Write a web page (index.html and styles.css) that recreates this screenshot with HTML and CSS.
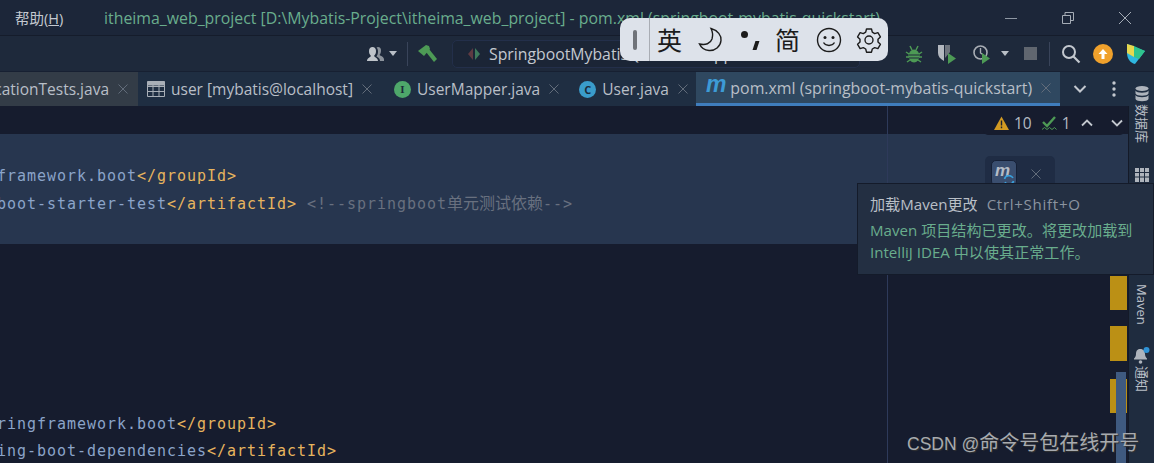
FILE: index.html
```html
<!DOCTYPE html>
<html lang="zh">
<head>
<meta charset="utf-8">
<title>pom.xml</title>
<link rel="stylesheet" href="styles.css">
</head>
<body>
<div class="app">
  <header class="titlebar">
    <span class="menu">帮助(<u>H</u>)</span>
    <span class="title">itheima_web_project [D:\Mybatis-Project\itheima_web_project] - pom.xml (springboot-mybatis-quickstart)</span>
    <div class="winctl">
      <svg width="14" height="14" viewBox="0 0 14 14"><path d="M1 7.500h12" stroke="#8e97a3" fill="none"/></svg>
      <svg width="14" height="14" viewBox="0 0 14 14"><path d="M1.500 4.500h8v8h-8zM4 4.500v-3h8.500v8h-3" stroke="#a5acb6" fill="none"/></svg>
      <svg width="14" height="14" viewBox="0 0 14 14"><path d="M1 1l12 12M13 1L1 13" stroke="#a5acb6" fill="none"/></svg>
    </div>
  </header>

  <div class="toolbar">
    <svg class="i-user" width="20" height="20" viewBox="0 0 20 20"><path d="M1 17c0-3 3-3.500 4-5-1.500-1.500-2-3-2-5 0-2.500 1.500-4 3.500-4s3.500 1.500 3.500 4c0 2-.5 3.500-2 5 1 1.500 4 2 4 5z" fill="#bfc4ca"/><path d="M12 3c2 0 3 1.500 3 3.500 0 2-.5 3-1.500 4.500 1 1 4.500 1.500 4.500 4.500v1.500h-4c0-2-1-3-3.500-4.500 1-1.500 1.500-3 1.500-5 0-1.500-.5-3-1.500-4z" fill="#8c939c"/></svg>
    <span class="caret"></span>
    <span class="tb-sep"></span>
    <svg class="i-hammer" width="20" height="20" viewBox="0 0 20 20"><path d="M0 7L8 1l3 1 1 3-6 7z" fill="#4d9a55"/><path d="M8 8l3-3 8 10-3 3z" fill="#4d9a55"/></svg>
    <div class="runcfg">
      <svg width="14" height="14" viewBox="0 0 14 14"><path d="M6 1L1 7l5 6z" fill="#5f3a42"/><path d="M8 1l5 6-5 6z" fill="#3f7a5c"/></svg>
      <span class="runcfg-name">SpringbootMybatisQuickstartApplication</span>
    </div>
    <svg class="i-bug" width="18" height="20" viewBox="0 0 18 20"><ellipse cx="9" cy="12" rx="5.500" ry="6.500" fill="#4d9a55"/><path d="M5 2l2 4M13 2l-2 4M1 8l3 2M17 8l-3 2M1 13h3M14 13h3M2 18l3-2M16 18l-3-2" stroke="#4d9a55" stroke-width="1.500"/><path d="M4 11h10M4 14h10" stroke="#1e293b"/></svg>
    <svg class="i-cover" width="20" height="20" viewBox="0 0 20 20"><path d="M1 1h6v16C3 15 1 12 1 9z" fill="#b3b8bf"/><path d="M8 1h5v7l-5 6z" fill="#6f757e"/><path d="M11 9l8 5.500-8 5.500z" fill="#4d9a55"/></svg>
    <svg class="i-prof" width="20" height="20" viewBox="0 0 20 20"><circle cx="8.500" cy="8.500" r="6.500" fill="none" stroke="#a8adb4" stroke-width="1.600"/><path d="M8.500 4v5l3 2" stroke="#a8adb4" fill="none" stroke-width="1.400"/><path d="M10 9l8 5.500-8 5.500z" fill="#4d9a55"/></svg>
    <span class="caret caret-prof"></span>
    <span class="stop"></span>
    <span class="tb-sep tb-sep2"></span>
    <svg class="i-search" width="20" height="20" viewBox="0 0 20 20"><circle cx="8" cy="8" r="6" fill="none" stroke="#c3c8cf" stroke-width="2"/><path d="M12.500 12.500l6 6" stroke="#c3c8cf" stroke-width="2.200"/></svg>
    <svg class="i-up" width="20" height="20" viewBox="0 0 20 20"><circle cx="10" cy="10" r="10" fill="#f0a12c"/><path d="M10 5l4.500 5H11.500v5h-3v-5H5.500z" fill="#fff"/></svg>
    <svg class="i-color" width="20" height="22" viewBox="0 0 20 22"><path d="M1 1l18 7-10 13C4 20 1 15 1 10z" fill="#2fb7e0"/><path d="M8 3l11 5-6 8-5-2z" fill="#2fc48d"/><path d="M1 1l7 2v11L1 10z" fill="#e7d84e"/></svg>
  </div>

  <nav class="tabs">
    <div class="tab tab-first"><span class="tab-name">cationTests.java</span><svg class="x" width="10" height="10" viewBox="0 0 10 10"><path d="M.5.500l9 9M9.500.500l-9 9"/></svg></div>
    <div class="tab">
      <svg class="tab-ic" width="18" height="16" viewBox="0 0 18 16"><path d="M.5.500h17v15H.5z" fill="none" stroke="#a9afb7"/><path d="M.5 5.500h17M.5 10.500h17M6 .5v15M12 .5v15" stroke="#a9afb7"/><path d="M.5.500h17v4H.5z" fill="#a9afb7"/></svg>
      <span class="tab-name">user [mybatis@localhost]</span><svg class="x" width="10" height="10" viewBox="0 0 10 10"><path d="M.5.500l9 9M9.500.500l-9 9"/></svg>
    </div>
    <div class="tab tab-mapper"><span class="badge badge-i">I</span><span class="tab-name">UserMapper.java</span><svg class="x" width="10" height="10" viewBox="0 0 10 10"><path d="M.5.500l9 9M9.500.500l-9 9"/></svg></div>
    <div class="tab tab-user"><span class="badge badge-c">C</span><span class="tab-name">User.java</span><svg class="x" width="10" height="10" viewBox="0 0 10 10"><path d="M.5.500l9 9M9.500.500l-9 9"/></svg></div>
    <div class="tab tab-active"><span class="m-mark">m</span><span class="tab-name">pom.xml (springboot-mybatis-quickstart)</span><svg class="x" width="10" height="10" viewBox="0 0 10 10"><path d="M.5.500l9 9M9.500.500l-9 9"/></svg></div>
    <svg class="i-chev" width="14" height="10" viewBox="0 0 14 10"><path d="M1.500 2l5.500 5.500L12.500 2" stroke="#c3c8cf" stroke-width="2" fill="none"/></svg>
    <svg class="i-dots" width="4" height="16" viewBox="0 0 4 16"><circle cx="2" cy="2" r="1.700" fill="#c3c8cf"/><circle cx="2" cy="8" r="1.700" fill="#c3c8cf"/><circle cx="2" cy="14" r="1.700" fill="#c3c8cf"/></svg>
  </nav>

  <main class="body">
    <section class="editor">
      <div class="code">
        <span class="ln"> </span>
        <span class="ln"> </span>
        <span class="ln">framework.boot<b>&lt;/groupId&gt;</b></span>
        <span class="ln">boot-starter-test<b>&lt;/artifactId&gt;</b> <i>&lt;!--springboot<em>单元测试依赖</em>--&gt;</i></span>
        <span class="ln"> </span>
        <span class="ln"> </span>
        <span class="ln"> </span>
        <span class="ln"> </span>
        <span class="ln"> </span>
        <span class="ln"> </span>
        <span class="ln"> </span>
        <span class="ln">ringframework.boot<b>&lt;/groupId&gt;</b></span>
        <span class="ln">ing-boot-dependencies<b>&lt;/artifactId&gt;</b></span>
      </div>
      <div class="select-band"></div>
      <div class="margin-line"></div>
      <div class="inspect">
        <svg width="15" height="14" viewBox="0 0 15 14"><path d="M7.500.5L15 14H0z" fill="#d29a22"/><path d="M6.800 4.500h1.400v5H6.800zM6.800 10.500h1.400v1.800H6.800z" fill="#1b2030"/></svg>
        <span class="cnt">10</span>
        <svg class="i-typo" width="15" height="15" viewBox="0 0 15 15"><path d="M1 6l4 4 8-9" stroke="#4e9a55" stroke-width="2.400" fill="none"/><path d="M0 13.500l2.500-2 2.500 2 2.500-2 2.500 2 2.500-2 2 2" stroke="#4e9a55" fill="none"/></svg>
        <span class="cnt">1</span>
        <svg class="i-up-arrow" width="12" height="8" viewBox="0 0 12 8"><path d="M1 6.500l5-5 5 5" stroke="#c3c8cf" stroke-width="1.800" fill="none"/></svg>
        <svg class="i-down-arrow" width="12" height="8" viewBox="0 0 12 8"><path d="M1 1.500l5 5 5-5" stroke="#c3c8cf" stroke-width="1.800" fill="none"/></svg>
      </div>
      <div class="float-m">
        <span class="float-btn"><span class="m-small">m</span>
          <svg class="i-sync" width="12" height="10" viewBox="0 0 12 10"><path d="M1.500 4A4.500 4 0 0 1 10 3M10.500 6A4.500 4 0 0 1 2 7" stroke="#39a0dc" stroke-width="1.600" fill="none"/></svg>
        </span>
        <svg class="x x-float" width="10" height="10" viewBox="0 0 10 10"><path d="M.5.500l9 9M9.500.500l-9 9"/></svg>
      </div>
      <span class="mark mark-1"></span>
      <span class="mark mark-2"></span>
      <span class="mark mark-3"></span>
      <span class="thumb"></span>
    </section>
    <aside class="stripe">
      <svg class="s-db" width="14" height="16" viewBox="0 0 14 16"><ellipse cx="7" cy="2.500" rx="6.500" ry="2.500" fill="#aeb4bc"/><path d="M.5 4.500c1 3 12 3 13 0v3c-1 3-12 3-13 0zM.5 9c1 3 12 3 13 0v4c-1 3-12 3-13 0z" fill="#aeb4bc"/></svg>
      <span class="s-text s-db-text">数据库</span>
      <svg class="s-table" width="14" height="14" viewBox="0 0 14 14"><path d="M0 0h14v14H0z" fill="#aeb4bc"/><path d="M0 4.500h14M0 9h14M4.500 0v14M9.500 0v14" stroke="#1f2c3f"/></svg>
      <span class="s-text s-maven">Maven</span>
      <svg class="s-bell" width="17" height="17" viewBox="0 0 17 17"><path d="M7 2c-3 0-4 2.500-4 5 0 2-1 3.500-2 4.500v1h13v-1c-1-1-2-2.500-2-4.500 0-2.500-1-5-5-5z" fill="#aeb4bc"/><circle cx="7.500" cy="15" r="1.800" fill="#aeb4bc"/><circle cx="13.500" cy="3" r="3" fill="#2f93d6"/></svg>
      <span class="s-text s-notify">通知</span>
    </aside>
  </main>

  <div class="ime">
    <span class="ime-grip"><span class="ime-handle"></span></span>
    <span class="ime-key">英</span>
    <svg class="ime-ic" width="26" height="26" viewBox="0 0 26 26"><path d="M14 1.500c7 2 10.500 7 10 12-.5 6-6 10.500-12 10-4.500-.4-8-3-9.500-6.500 6 1.500 11-.5 12.500-5 1-3.500.8-7-1-10.500z" fill="none" stroke="#1c1c1c" stroke-width="1.400"/></svg>
    <span class="ime-punc"><span class="dot"></span><span class="comma"></span></span>
    <span class="ime-key ime-key2">简</span>
    <svg class="ime-ic ime-smile" width="26" height="26" viewBox="0 0 26 26"><circle cx="13" cy="13" r="11.500" fill="none" stroke="#1c1c1c" stroke-width="1.400"/><circle cx="9" cy="10.500" r="1.500" fill="#1c1c1c"/><circle cx="17" cy="10.500" r="1.500" fill="#1c1c1c"/><path d="M7.500 15.500c2.500 4 8.500 4 11 0" fill="none" stroke="#1c1c1c" stroke-width="1.400"/></svg>
    <svg class="ime-ic ime-gear" width="26" height="26" viewBox="0 0 26 26"><path d="M10.500 2h5l.8 3.200 2.400 1.400 3.200-1 2.500 4.300-2.400 2.300v2.800l2.400 2.300-2.500 4.300-3.200-1-2.400 1.400-.8 3.200h-5l-.8-3.200-2.400-1.400-3.200 1-2.500-4.300 2.400-2.300v-2.800L1.600 9.900l2.500-4.300 3.200 1 2.400-1.400z" fill="none" stroke="#1c1c1c" stroke-width="1.400" stroke-linejoin="round"/><circle cx="13" cy="13" r="4" fill="none" stroke="#1c1c1c" stroke-width="1.400"/></svg>
  </div>

  <div class="tooltip">
    <p class="tip-head">加载Maven更改<span class="tip-key">Ctrl+Shift+O</span></p>
    <p class="tip-body">Maven 项目结构已更改。将更改加载到<br>IntelliJ IDEA 中以使其正常工作。</p>
  </div>

  <div class="watermark">CSDN @<span class="wm-cjk">命令号包在线开号</span></div>
</div>
</body>
</html>
```
FILE: styles.css
```css
* { box-sizing: border-box; }
html, body { margin: 0; padding: 0; }
body { width: 1154px; height: 463px; overflow: hidden; background: #161c2e; }
.app {
  position: relative; width: 1154px; height: 463px; overflow: hidden;
  display: flex; flex-direction: column;
  font-family: "Open Sans", "Noto Sans CJK SC", sans-serif; font-size: 15.500px; color: #b9bfc7;
}
.titlebar {
  height: 36px; flex: none; display: flex; align-items: center;
  background: #1c2639; padding-left: 15px;
  border-bottom: 1px solid #151c2b;
}
.menu { font-size: 14.500px; color: #c4c9d0; width: 89px; flex: none; }
.title { color: #69ad8d; font-size: 15.870px; white-space: nowrap; }
.winctl { margin-left: auto; display: flex; gap: 43px; padding-right: 22px; }
.toolbar {
  height: 35px; flex: none; display: flex; align-items: center;
  background: #1e293b; padding-left: 366px;
}
.caret { width: 0; height: 0; border: 4.500px solid transparent; border-top: 5px solid #b9bfc7; border-bottom: 0; margin-left: 3px; }
.tb-sep { width: 1px; height: 24px; background: #39445a; margin-left: 10px; }
.i-hammer { margin-left: 10px; }
.runcfg {
  margin-left: 14px; width: 408px; height: 28px; flex: none; overflow: hidden;
  display: flex; align-items: center; gap: 8px; padding-left: 14px;
  border: 1px solid #232f4a; border-radius: 5px; background: #1b2536; white-space: nowrap;
}
.runcfg-name { color: #c4c9d0; font-size: 15.800px; }
.i-bug { margin-left: 45px; }
.i-cover { margin-left: 14px; }
.i-prof { margin-left: 15px; }
.caret-prof { margin-left: 9px; }
.stop { width: 13px; height: 13px; background: #60666f; margin-left: 15px; }
.tb-sep2 { margin-left: 12px; }
.i-search { margin-left: 11px; }
.i-up { margin-left: 12px; }
.i-color { margin-left: 13px; }
.tabs {
  height: 35px; flex: none; display: flex; align-items: center;
  background: #1f2e42; border-top: 1px solid #172032;
}
.tab { display: flex; align-items: center; height: 100%; white-space: nowrap; }
.tab-name { color: #b9bfc7; }
.tab-first {
  width: 138px; flex: none; background: #333c47; margin-right: 9px; overflow: hidden;
  justify-content: flex-end; padding-right: 10px;
}
.x { flex: none; margin-left: 9px; fill: none; stroke: #626c7a; }
.tab-ic { margin-right: 6px; }
.badge {
  width: 17px; height: 17px; border-radius: 50%; color: #1c2a3a; font-size: 11px; font-weight: 700;
  display: inline-flex; align-items: center; justify-content: center; margin-right: 6px; flex: none;
}
.badge-i { background: #4ea76a; font-family: "Liberation Serif", serif; }
.badge-c { background: #3a9ccb; }
.tab-mapper { margin-left: 22px; }
.tab-user { margin-left: 20px; }
.tab-active {
  margin-left: 8px; width: 364px; flex: none; background: #2f4860; padding-left: 10px;
  border-bottom: 3px solid #3f7dbd;
}
.tab-active .tab-name { font-size: 15.900px; }
.m-mark { color: #3d9bd6; font: italic 700 23px/1 "Liberation Sans", sans-serif; margin-right: 4px; margin-top: -6px; }
.i-chev { margin-left: 13px; }
.i-dots { margin-left: 25px; }
.body { flex: 1; min-height: 0; display: flex; }
.editor { position: relative; flex: 1; min-width: 0; background: #161c2e; overflow: hidden; }
.select-band { position: absolute; left: 0; right: 0; top: 28px; height: 110px; background: #27364f; }
.code {
  position: relative; z-index: 1; margin: 2px 0 0 -3px;
  font: 15px/27.500px "DejaVu Sans Mono", monospace; letter-spacing: .97px; color: #8ba4c9;
}
.ln { display: block; height: 27.500px; white-space: pre; }
.code b { font-weight: 400; color: #e6b45e; }
.code i { font-style: normal; color: #68707f; }
.code em { font: normal 16px/1 "Noto Sans CJK SC", sans-serif; letter-spacing: 0; }
.margin-line { position: absolute; z-index: 2; left: 887px; top: 0; bottom: 0; width: 1px; background: #2e3a5a; }
.inspect {
  position: absolute; z-index: 3; top: 0; left: 983px; width: 142px; height: 29px; background: #161c2e;
  border-radius: 0 0 5px 5px; display: flex; align-items: center; padding: 5px 0 0 11px; gap: 5px;
}
.cnt { font-size: 15.500px; color: #b4bac2; }
.i-typo { margin-left: 5px; }
.i-up-arrow { margin-left: 5px; }
.i-down-arrow { margin-left: 13px; }
.float-m {
  position: absolute; z-index: 3; left: 985px; top: 50px; width: 70px; height: 40px;
  background: #1f2c44; border-radius: 5px;
}
.float-btn {
  position: absolute; left: 6px; top: 4px; width: 26px; height: 26px; background: #3a4e6f;
  border: 1px solid #162036; border-radius: 5px;
}
.m-small { position: absolute; left: 3px; top: 1px; font: italic 700 17px/1 "Liberation Sans", sans-serif; color: #b5bcc6; }
.i-sync { position: absolute; right: 1px; bottom: 0; }
.x-float { position: absolute; left: 46px; top: 13px; margin: 0; }
.mark { position: absolute; z-index: 2; right: 1px; width: 17px; height: 34px; background: #bb9015; }
.mark-1 { top: 170px; }
.mark-2 { top: 220px; height: 35px; }
.mark-3 { top: 273px; }
.thumb { position: absolute; z-index: 3; right: 2px; top: 266px; bottom: 0; width: 10px; background: #3f5a80; }
.stripe {
  width: 26px; flex: none; background: #1f2c3f; border-left: 1px solid #141a28;
  display: flex; flex-direction: column; align-items: center;
}
.s-db { margin-top: -20px; flex: none; }
.s-text { writing-mode: vertical-rl; text-orientation: sideways; font-size: 13px; color: #b9bfc7; line-height: 1; white-space: nowrap; }
.s-db-text { margin-top: 2px; }
.s-table { margin-top: 25px; flex: none; }
.s-maven { margin-top: 102px; }
.s-bell { margin-top: 22px; flex: none; }
.s-notify { margin-top: 2px; }
.ime {
  position: absolute; z-index: 5; left: 620px; top: 18px; width: 268px; height: 43px;
  background: #dde2ea; border-radius: 10px; display: flex; align-items: center; color: #1c1c1c;
}
.ime-grip { width: 30px; height: 100%; flex: none; border-right: 1px solid #a9adb4; display: flex; align-items: center; justify-content: center; }
.ime-handle { width: 4px; height: 20px; background: #6f7379; border-radius: 2px; }
.ime-key { font: 25px/1 "Noto Sans CJK SC", sans-serif; margin-left: 7px; }
.ime-key2 { margin-left: 14px; }
.ime-ic { margin-left: 15px; flex: none; }
.ime-smile { margin-left: 16px; }
.ime-gear { margin-left: 14px; }
.ime-punc { position: relative; width: 20px; height: 26px; margin-left: 18px; flex: none; }
.dot { position: absolute; left: 0; top: 4px; width: 7px; height: 7px; border-radius: 50%; background: #1c1c1c; }
.comma { position: absolute; left: 13px; top: 14px; width: 4px; height: 9px; background: #1c1c1c; transform: skewX(-18deg); }
.tooltip {
  position: absolute; z-index: 6; left: 857px; top: 183px; width: 297px; height: 92px;
  background: #232f42; border: 1px solid #141b2a; padding: 10px 0 0 12px; font-size: 15.100px;
}
.tip-head { margin: 0; color: #b9bfc7; line-height: 20px; }
.tip-key { color: #8b94a0; margin-left: 9px; letter-spacing: .7px; }
.tip-body { margin: 5px 0 0; color: #69ad8d; line-height: 22px; }
.watermark {
  position: absolute; z-index: 7; left: 907px; top: 430px; font: 17.500px/24px "Liberation Sans", "Noto Sans CJK SC", sans-serif;
  color: #a8abaf; text-shadow: 1px 1px 1px #333;
  white-space: nowrap;
}
.wm-cjk { font-family: "Noto Sans CJK SC", sans-serif; font-size: 20px; }
```
